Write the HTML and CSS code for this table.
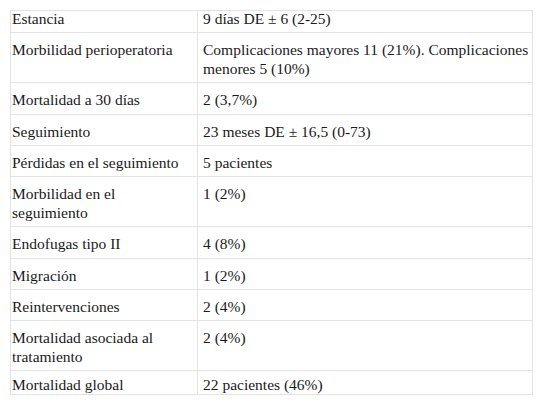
FILE: index.html
```html
<!DOCTYPE html>
<html lang="es">
<head>
<meta charset="utf-8">
<link rel="stylesheet" href="styles.css">
</head>
<body>
<table class="results">
  <tbody>
    <tr class="first"><td class="label">Estancia</td><td class="value">9 días DE ± 6 (2-25)</td></tr>
    <tr><td class="label">Morbilidad perioperatoria</td><td class="value">Complicaciones mayores 11 (21%). Complicaciones menores 5 (10%)</td></tr>
    <tr><td class="label">Mortalidad a 30 días</td><td class="value">2 (3,7%)</td></tr>
    <tr><td class="label">Seguimiento</td><td class="value">23 meses DE ± 16,5 (0-73)</td></tr>
    <tr><td class="label">Pérdidas en el seguimiento</td><td class="value">5 pacientes</td></tr>
    <tr><td class="label">Morbilidad en el seguimiento</td><td class="value">1 (2%)</td></tr>
    <tr><td class="label">Endofugas tipo II</td><td class="value">4 (8%)</td></tr>
    <tr><td class="label">Migración</td><td class="value">1 (2%)</td></tr>
    <tr><td class="label">Reintervenciones</td><td class="value">2 (4%)</td></tr>
    <tr><td class="label">Mortalidad asociada al tratamiento</td><td class="value">2 (4%)</td></tr>
    <tr class="last"><td class="label">Mortalidad global</td><td class="value">22 pacientes (46%)</td></tr>
  </tbody>
</table>
</body>
</html>
```

FILE: styles.css
```css
html, body {
  margin: 0;
  padding: 0;
  background: #ffffff;
}

body {
  padding: 10px 0 0 10px;
  font-family: "Liberation Serif", "Times New Roman", serif;
  font-size: 15.5px;
  line-height: 19.2px;
  color: #1a1a1a;
}

.results {
  border-collapse: collapse;
  width: 523px;
  border: 1px solid #e3e3e3;
}

.results td {
  border: 1px solid #e3e3e3;
  vertical-align: top;
  padding: 7px 5px 4px;
}

.results td.label {
  width: 180px;
  padding-left: 1px;
  padding-right: 5px;
}

.results td.value {
  padding-left: 5px;
  padding-right: 0;
}

.results tr.first td {
  padding-top: 0;
  padding-bottom: 6px;
  line-height: 15px;
}

.results tr.last td {
  padding-top: 5px;
  padding-bottom: 0;
  line-height: 18px;
}
```
